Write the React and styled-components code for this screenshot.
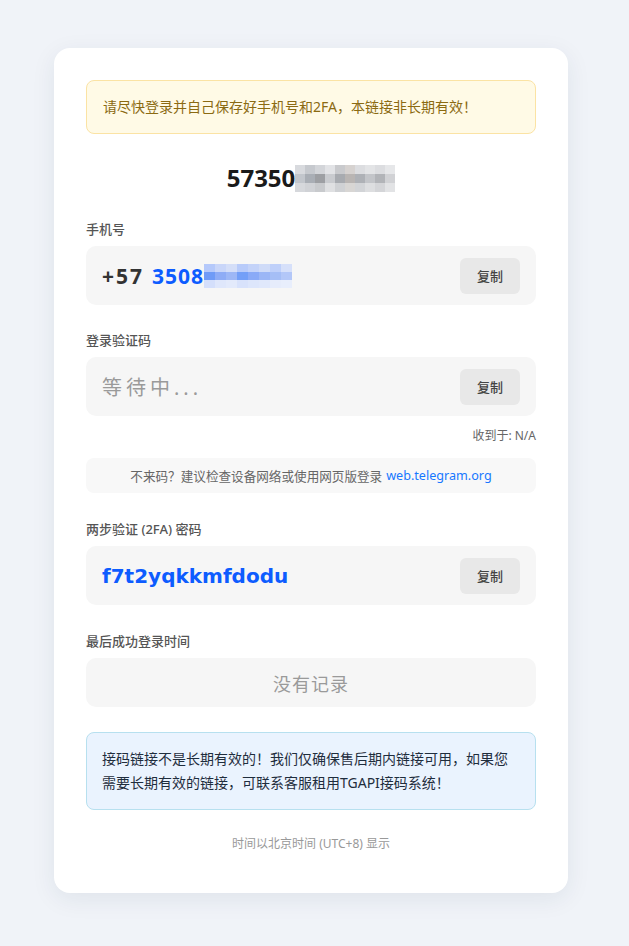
import styled, { createGlobalStyle } from "styled-components";

const GlobalStyle = createGlobalStyle`
  html, body {
    margin: 0;
    padding: 0;
    background: #f0f3f8;
    font-family: "Noto Sans", "Noto Sans CJK SC", sans-serif;
  }
`;

const Page = styled.div`
  padding: 48px 61px 53px 54px;
`;

const Card = styled.div`
  background: #fff;
  border-radius: 16px;
  box-shadow: 0 6px 24px rgba(30, 45, 80, 0.08);
  padding: 32px 32px 41px;
  display: flex;
  flex-direction: column;
`;

const Notice = styled.div`
  background: #fffae6;
  border: 1px solid #fbe3a4;
  border-radius: 8px;
  padding: 15px 16px;
  font-size: 14px;
  line-height: 22px;
  color: #8b6a12;
`;

const Account = styled.div`
  display: flex;
  justify-content: center;
  align-items: center;
  margin-top: 30px;
  font-size: 24px;
  font-weight: 700;
  color: #1a1a1a;
  line-height: 28px;
`;

const Label = styled.div`
  font-size: 13px;
  color: #555;
  font-weight: 500;
  line-height: 18px;
  margin-top: ${(p) => p.$top}px;
  margin-bottom: 8px;
`;

const Field = styled.div`
  background: #f6f6f6;
  border-radius: 10px;
  height: ${(p) => p.$h || 59}px;
  display: flex;
  align-items: center;
  justify-content: ${(p) => (p.$center ? "center" : "space-between")};
  padding: 0 16px;
`;

const Value = styled.div`
  display: flex;
  align-items: center;
  font-size: 21px;
  font-weight: 700;
  letter-spacing: 2px;
  color: #333;
`;

const Blue = styled.span`
  color: #0d5cff;
  margin-left: 8px;
  letter-spacing: 1px;
`;

const Code = styled.div`
  font-family: "DejaVu Sans", "Noto Sans", sans-serif;
  font-size: 20px;
  font-weight: 700;
  color: #0d5cff;
`;

const Waiting = styled.div`
  font-size: 20px;
  color: #9a9a9a;
  letter-spacing: 4px;
`;

const Empty = styled.div`
  font-size: 18px;
  color: #9a9a9a;
  letter-spacing: 1px;
`;

const CopyBtn = styled.button`
  width: 60px;
  height: 36px;
  border: none;
  border-radius: 6px;
  background: #e8e8e8;
  color: #444;
  font-family: inherit;
  font-size: 13px;
  font-weight: 500;
  cursor: pointer;
`;

const Received = styled.div`
  text-align: right;
  font-size: 12px;
  color: #666;
  margin-top: 12px;
  line-height: 16px;
`;

const Hint = styled.div`
  margin-top: 14px;
  background: #f8f8f8;
  border-radius: 8px;
  height: 35px;
  display: flex;
  align-items: center;
  justify-content: center;
  font-size: 12.6px;
  color: #666;

  a {
    color: #1677ff;
    text-decoration: none;
    margin-left: 4px;
  }
`;

const Info = styled.div`
  margin-top: 25px;
  background: #eaf3fe;
  border: 1px solid #b7e0ef;
  border-radius: 8px;
  padding: 14px 15px;
  font-size: 14px;
  line-height: 24px;
  color: #1f2d3d;
`;

const Footer = styled.div`
  margin-top: 26px;
  text-align: center;
  font-size: 12px;
  color: #999;
  line-height: 16px;
`;

const Mosaic = ({ cols, rows, w, h, colors }) => (
  <svg width={cols * w} height={rows * h} style={{ display: "block" }}>
    {colors.map((c, i) => (
      <rect
        key={i}
        x={(i % cols) * w}
        y={Math.floor(i / cols) * h}
        width={w}
        height={h}
        fill={c}
      />
    ))}
  </svg>
);

const grey = [
  "#d8dade", "#c6c9ce", "#d3d5d9", "#e2e3e6", "#c9cacd", "#d6d2d0", "#dcdde0", "#e3e4e6", "#dcdde0", "#e6e7e9",
  "#c2c6cc", "#a9aeb5", "#9d9fa3", "#c9cbcf", "#a8abb0", "#b9b5b3", "#aeb1b6", "#c3c5c9", "#b2b4b8", "#d1d2d5",
  "#d6d8dc", "#d0d2d6", "#c8cacd", "#dfe0e2", "#cfd1d4", "#d8d6d4", "#d2d4d7", "#dddee0", "#d4d5d8", "#e2e3e5",
];

const blue = [
  "#b5c9fb", "#c9d6f9", "#d4def8", "#b8cbfa", "#c4d3f9", "#cfdbf8", "#bfd0fa", "#d6e0fa",
  "#6f9bf7", "#8eacf6", "#9db7f6", "#739ff8", "#8aaaf7", "#9bb6f6", "#a5bef6", "#b3c7f8",
  "#d4dffb", "#dfe7fb", "#e3eafb", "#d8e2fb", "#dde6fb", "#e0e8fb", "#e6ecfb", "#e8eefc",
];

const App = () => (
  <>
    <GlobalStyle />
    <Page>
      <Card>
        <Notice>请尽快登录并自己保存好手机号和2FA，本链接非长期有效！</Notice>

        <Account>
          57350
          <Mosaic cols={10} rows={3} w={10} h={9} colors={grey} />
        </Account>

        <Label $top={28}>手机号</Label>
        <Field>
          <Value>
            +57
            <Blue>3508</Blue>
            <Mosaic cols={8} rows={3} w={11} h={8} colors={blue} />
          </Value>
          <CopyBtn>复制</CopyBtn>
        </Field>

        <Label $top={26}>登录验证码</Label>
        <Field>
          <Waiting>等待中...</Waiting>
          <CopyBtn>复制</CopyBtn>
        </Field>
        <Received>收到于: N/A</Received>
        <Hint>
          不来码？建议检查设备网络或使用网页版登录
          <a href="#">web.telegram.org</a>
        </Hint>

        <Label $top={27}>两步验证 (2FA) 密码</Label>
        <Field>
          <Code>f7t2yqkkmfdodu</Code>
          <CopyBtn>复制</CopyBtn>
        </Field>

        <Label $top={27}>最后成功登录时间</Label>
        <Field $h={49} $center>
          <Empty>没有记录</Empty>
        </Field>

        <Info>
          接码链接不是长期有效的！我们仅确保售后期内链接可用，如果您需要长期有效的链接，可联系客服租用TGAPI接码系统！
        </Info>

        <Footer>时间以北京时间 (UTC+8) 显示</Footer>
      </Card>
    </Page>
  </>
);

export default App;
